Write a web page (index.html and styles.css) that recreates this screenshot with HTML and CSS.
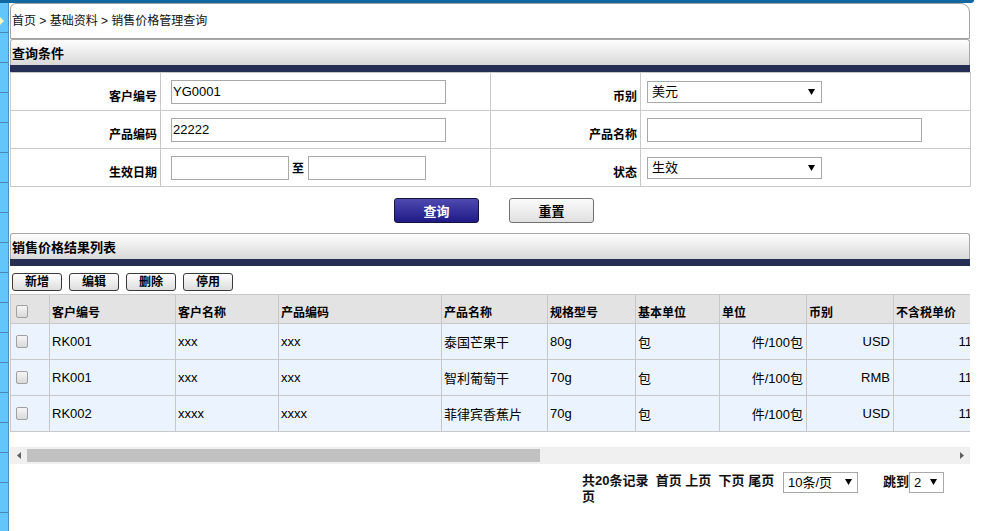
FILE: index.html
```html
<!DOCTYPE html>
<html lang="zh-CN">
<head>
<meta charset="utf-8">
<title>销售价格管理查询</title>
<link rel="stylesheet" href="styles.css">
</head>
<body>
<div class="topbar"></div>
<div class="layout">
  <aside class="sidenav"><span class="sidenav-arrow"></span></aside>
  <main class="main">
    <div class="crumb">首页 &gt; 基础资料 &gt; 销售价格管理查询</div>

    <section class="panel">
      <div class="panel-title">查询条件</div>
      <div class="panel-rule"></div>
      <table class="form-table">
        <colgroup><col class="c-lbl"><col class="c-fld"><col class="c-lbl"><col class="c-fld2"></colgroup>
        <tr>
          <th>客户编号</th>
          <td class="fld"><input class="txt txt-lg" type="text" value="YG0001"></td>
          <th>币别</th>
          <td class="fld2"><span class="sel sel-md"><select><option>美元</option></select><svg class="sel-arrow" width="7" height="6" viewBox="0 0 7 6"><path d="M0 0H7L3.5 6Z" fill="#000"/></svg></span></td>
        </tr>
        <tr>
          <th>产品编码</th>
          <td class="fld"><input class="txt txt-lg" type="text" value="22222"></td>
          <th>产品名称</th>
          <td class="fld2"><input class="txt txt-lg" type="text" value=""></td>
        </tr>
        <tr>
          <th>生效日期</th>
          <td class="fld"><input class="txt txt-sm" type="text" value=""><span class="to">至</span><input class="txt txt-sm" type="text" value=""></td>
          <th>状态</th>
          <td class="fld2"><span class="sel sel-md"><select><option>生效</option></select><svg class="sel-arrow" width="7" height="6" viewBox="0 0 7 6"><path d="M0 0H7L3.5 6Z" fill="#000"/></svg></span></td>
        </tr>
      </table>
      <div class="actions">
        <button class="btn-primary" type="button">查询</button>
        <button class="btn-secondary" type="button">重置</button>
      </div>
    </section>

    <section class="panel">
      <div class="panel-title">销售价格结果列表</div>
      <div class="panel-rule"></div>
      <div class="toolbar">
        <button class="btn-tool" type="button">新增</button>
        <button class="btn-tool" type="button">编辑</button>
        <button class="btn-tool" type="button">删除</button>
        <button class="btn-tool" type="button">停用</button>
      </div>
      <div class="grid-wrap">
        <table class="grid">
          <colgroup>
            <col class="w39"><col class="w126"><col class="w103"><col class="w163"><col class="w106">
            <col class="w88"><col class="w84"><col class="w87"><col class="w87"><col class="w100">
          </colgroup>
          <thead>
            <tr>
              <th class="chk"><input class="cb" type="checkbox"></th>
              <th>客户编号</th><th>客户名称</th><th>产品编码</th><th>产品名称</th>
              <th>规格型号</th><th>基本单位</th><th>单位</th><th>币别</th><th>不含税单价</th>
            </tr>
          </thead>
          <tbody>
            <tr>
              <td class="chk"><input class="cb" type="checkbox"></td>
              <td>RK001</td><td>xxx</td><td>xxx</td><td>泰国芒果干</td>
              <td>80g</td><td>包</td><td class="num">件/100包</td><td class="num">USD</td><td class="num">11.00</td>
            </tr>
            <tr>
              <td class="chk"><input class="cb" type="checkbox"></td>
              <td>RK001</td><td>xxx</td><td>xxx</td><td>智利葡萄干</td>
              <td>70g</td><td>包</td><td class="num">件/100包</td><td class="num">RMB</td><td class="num">11.00</td>
            </tr>
            <tr>
              <td class="chk"><input class="cb" type="checkbox"></td>
              <td>RK002</td><td>xxxx</td><td>xxxx</td><td>菲律宾香蕉片</td>
              <td>70g</td><td>包</td><td class="num">件/100包</td><td class="num">USD</td><td class="num">11.00</td>
            </tr>
          </tbody>
        </table>
      </div>
      <div class="hscroll">
        <span class="hs-btn"><svg width="4" height="7" viewBox="0 0 4 7"><path d="M4 0V7L0 3.5Z" fill="#606060"/></svg></span>
        <span class="hs-track"><span class="hs-thumb"></span></span>
        <span class="hs-btn"><svg width="4" height="7" viewBox="0 0 4 7"><path d="M0 0V7L4 3.5Z" fill="#606060"/></svg></span>
      </div>
      <div class="pager">
        <div class="pager-info">共20条记录&nbsp; 首页 上页&nbsp; 下页 尾页 页</div>
        <span class="sel sel-page"><select><option>10条/页</option></select><svg class="sel-arrow" width="7" height="6" viewBox="0 0 7 6"><path d="M0 0H7L3.5 6Z" fill="#000"/></svg></span>
        <span class="jump">跳到</span>
        <span class="sel sel-jump"><select><option>2</option></select><svg class="sel-arrow" width="7" height="6" viewBox="0 0 7 6"><path d="M0 0H7L3.5 6Z" fill="#000"/></svg></span>
      </div>
    </section>
  </main>
</div>
</body>
</html>
```

FILE: styles.css
```css
* { box-sizing: border-box; }

html, body {
  margin: 0;
  padding: 0;
  background: #fff;
}

body {
  width: 1003px;
  height: 531px;
  overflow: hidden;
  font-family: "Liberation Sans", "Noto Sans CJK SC", sans-serif;
  font-size: 12px;
  color: #000;
}

.topbar {
  width: 974px;
  height: 3px;
  background: #11679f;
  border-bottom-right-radius: 3px;
}

.layout {
  display: flex;
  height: 528px;
}

.sidenav {
  flex: none;
  width: 9px;
  background: repeating-linear-gradient(to bottom, #63c6fb 0, #63c6fb 29px, #4a88b8 29px, #4a88b8 30px);
  border-right: 1px solid #4f8fc0;
}

.sidenav-arrow {
  display: block;
  width: 0;
  height: 0;
  margin-top: 14px;
  border-left: 4px solid #fff6c4;
  border-top: 4px solid transparent;
  border-bottom: 4px solid transparent;
}

.main {
  flex: none;
  width: 960px;
  margin-left: 1px;
}

/* breadcrumb */
.crumb {
  height: 36px;
  border: 1px solid #a3a3a3;
  border-radius: 6px 9px 0 0;
  padding: 0 0 4px 1px;
  display: flex;
  align-items: center;
  font-size: 12px;
  color: #111;
}

/* panels */
.panel-title {
  height: 26px;
  border: 1px solid #a8a8a8;
  border-bottom: none;
  border-radius: 3px 3px 0 0;
  background: linear-gradient(to bottom, #fefefe, #d9d9d9);
  display: flex;
  align-items: center;
  padding-left: 1px;
  font-size: 13px;
  font-weight: bold;
}

.panel-rule {
  height: 7px;
  background: #252f53;
}

/* form */
.form-table {
  width: 960px;
  border-collapse: collapse;
  table-layout: fixed;
}

.c-lbl { width: 150px; }
.c-fld { width: 330px; }
.c-fld2 { width: 330px; }

.form-table th,
.form-table td {
  border: 1px solid #c9c9c9;
  height: 38px;
  padding: 0;
  vertical-align: middle;
}

.form-table th {
  text-align: right;
  font-weight: bold;
  font-size: 12px;
  padding: 7px 3px 0 0;
}

.form-table td.fld { padding-left: 10px; }
.form-table td.fld2 { padding-left: 6px; }

.txt {
  height: 24px;
  border: 1px solid #a9a9a9;
  padding: 0 1px;
  font-family: "Liberation Sans", "Noto Sans CJK SC", sans-serif;
  font-size: 13px;
  color: #000;
  vertical-align: middle;
  outline: none;
}

.txt-lg { width: 275px; }
.txt-sm { width: 118px; }

.to {
  display: inline-block;
  margin: 0 4px 0 3px;
  font-size: 12px;
  font-weight: bold;
  vertical-align: middle;
}

.sel {
  position: relative;
  display: inline-block;
  vertical-align: middle;
}

.sel select {
  appearance: none;
  -webkit-appearance: none;
  display: block;
  width: 100%;
  height: 100%;
  border: 1px solid #a9a9a9;
  border-radius: 0;
  background: #fff;
  padding: 0 0 0 4px;
  font-family: "Liberation Sans", "Noto Sans CJK SC", sans-serif;
  font-size: 13px;
  color: #000;
  outline: none;
}

.sel-arrow {
  position: absolute;
  right: 7px;
  top: 8px;
}

.sel-md { width: 175px; height: 22px; }

/* action buttons */
.actions {
  display: flex;
  gap: 30px;
  padding: 11px 0 10px 384px;
}

.btn-primary,
.btn-secondary {
  width: 85px;
  height: 25px;
  border-radius: 3px;
  font-family: "Liberation Sans", "Noto Sans CJK SC", sans-serif;
  font-size: 13px;
  font-weight: bold;
  padding: 0;
  cursor: pointer;
}

.btn-primary {
  border: 1px solid #15153a;
  background: linear-gradient(to bottom, #4e4ab0, #1f1a86);
  color: #fff;
}

.btn-secondary {
  border: 1px solid #707070;
  background: linear-gradient(to bottom, #fbfbfb, #e0e0e0);
  color: #000;
}

/* toolbar */
.toolbar {
  display: flex;
  gap: 7px;
  padding: 7px 0 3px 2px;
}

.btn-tool {
  width: 50px;
  height: 18px;
  border: 1px solid #3a3a3a;
  border-radius: 3px;
  background: linear-gradient(to bottom, #fdfdfd, #dedede);
  font-family: "Liberation Sans", "Noto Sans CJK SC", sans-serif;
  font-size: 12px;
  font-weight: bold;
  padding: 0;
  line-height: 16px;
  color: #000;
}

/* grid */
.grid-wrap {
  width: 960px;
  overflow: hidden;
}

.grid {
  width: 983px;
  border-collapse: collapse;
  table-layout: fixed;
}

.w39 { width: 39px; }
.w84 { width: 84px; }
.w87 { width: 87px; }
.w88 { width: 88px; }
.w100 { width: 100px; }
.w103 { width: 103px; }
.w106 { width: 106px; }
.w126 { width: 126px; }
.w163 { width: 163px; }

.grid th,
.grid td {
  border: 1px solid #c8c8c8;
  white-space: nowrap;
  overflow: hidden;
}

.grid th {
  height: 29px;
  background: #e3e3e3;
  text-align: left;
  font-size: 12px;
  font-weight: bold;
  padding: 5px 2px 0 2px;
  vertical-align: middle;
}

.grid td {
  height: 36px;
  background: #ebf4fe;
  font-size: 13px;
  padding: 0 3px 0 2px;
  vertical-align: middle;
}

.grid td.num { text-align: right; }

.grid .chk { padding: 0 0 0 5px; }
.grid th.chk { padding-top: 5px; }

.cb {
  appearance: none;
  -webkit-appearance: none;
  display: block;
  width: 12px;
  height: 13px;
  margin: 0;
  border: 1px solid #a0a0a0;
  border-radius: 2px;
  background: linear-gradient(to bottom, #f6f6f6, #d9d9d9);
}

/* horizontal scrollbar */
.hscroll {
  display: flex;
  width: 960px;
  height: 17px;
  margin-top: 15px;
  background: #f0f0f0;
}

.hs-btn {
  flex: none;
  width: 17px;
  display: flex;
  align-items: center;
  justify-content: center;
}

.hs-track {
  flex: 1;
  display: flex;
  align-items: center;
}

.hs-thumb {
  width: 513px;
  height: 13px;
  background: #c1c1c1;
}

/* pager */
.pager {
  display: flex;
  align-items: flex-start;
  margin-top: 8px;
  padding-left: 572px;
}

.pager-info {
  width: 196px;
  font-size: 13px;
  font-weight: bold;
  line-height: 16px;
  padding-top: 1px;
  color: #111;
}

.sel-page {
  width: 75px;
  height: 21px;
  margin-left: 5px;
}

.sel-page .sel-arrow { right: 6px; top: 7px; }

.jump {
  margin-left: 25px;
  font-size: 13px;
  font-weight: bold;
  line-height: 16px;
  padding-top: 2px;
  color: #111;
}

.sel-jump {
  width: 35px;
  height: 21px;
}

.sel-jump .sel-arrow { right: 7px; top: 7px; }
```
